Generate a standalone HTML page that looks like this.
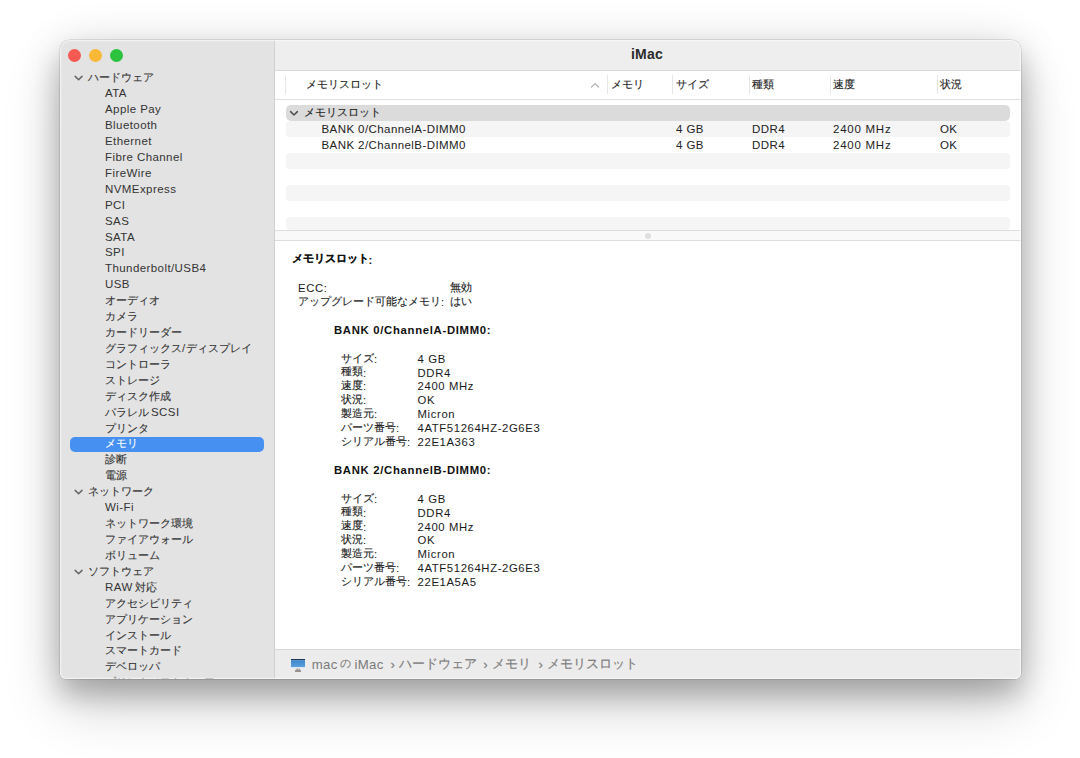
<!DOCTYPE html>
<html lang="ja">
<head>
<meta charset="utf-8">
<style>
*{margin:0;padding:0;box-sizing:border-box}
html,body{width:1080px;height:758px;background:#fff;overflow:hidden;font-family:"Liberation Sans",sans-serif;}
.win{position:absolute;left:60px;top:40px;width:961px;height:639px;border-radius:10px 10px 6px 6px;background:#fff;overflow:hidden;
 box-shadow:0 0 0 0.5px rgba(0,0,0,0.2),0 16px 26px rgba(0,0,0,0.19),0 26px 55px rgba(0,0,0,0.2),0 0 45px rgba(0,0,0,0.09);}
.side{position:absolute;left:0;top:0;width:215px;height:639px;background:#e3e3e3;border-right:1px solid #d0d0d0;overflow:hidden}
.t{position:absolute;white-space:nowrap;}
.abs{position:absolute}
.si{color:#333;}
.ht{color:#222;}
.rt{color:#222;}
.dt{color:#1a1a1a;}
.db{color:#111;font-weight:bold}
.ft{color:#7a7a7a;}
.chev{position:absolute}
.rim{position:absolute;left:0;top:0;width:961px;height:639px;border-radius:10px 10px 6px 6px;box-shadow:inset 0 0 0 1px rgba(255,255,255,0.45),inset 0 0 0 2px rgba(255,255,255,0.15);pointer-events:none}
.cj{position:relative;top:-1.2px;-webkit-text-stroke:0.12px currentColor}
.sel{position:absolute;left:10px;width:193.5px;height:15.3px;border-radius:5px;background:#4690f2}
.dot{position:absolute;width:13px;height:13px;border-radius:50%;top:8.8px}
.title{position:absolute;left:215px;top:0;width:746px;height:31px;background:#eeeeee;border-bottom:1px solid #d9d9d9}
.hdr{position:absolute;left:215px;top:31px;width:746px;height:29px;background:#fff;border-bottom:1px solid #e0e0e0}
.main{position:absolute;left:215px;top:60px;width:746px;height:549px;background:#fff}
.foot{position:absolute;left:215px;top:609px;width:746px;height:30px;background:#ececec;border-top:1px solid #d8d8d8}
.vd{position:absolute;top:35px;width:1px;height:19px;background:#e6e6e6}
.grp{position:absolute;width:724px;height:15.5px;border-radius:5px;background:#dbdbdb}
.stripe{position:absolute;width:724px;height:16px;border-radius:4px;background:#f5f5f5}
.split{position:absolute;width:746px;height:11px;background:#f9f9f9;border-top:1px solid #dddddd;border-bottom:1px solid #dddddd}
.sdot{position:absolute;width:6.4px;height:6.4px;border-radius:50%;background:#e0e0e0}
</style>
</head>
<body>
<div class="win">
  <div class="side">
    <div class="dot" style="left:8px;background:#f65a52"></div>
    <div class="dot" style="left:29px;background:#f9b835"></div>
    <div class="dot" style="left:50px;background:#2bc23d"></div>
    <svg class="chev" style="left:14px;top:35.0px" width="10" height="7" viewBox="0 0 10 7"><path d="M1.2 1.4 L4.6 4.8 L8 1.4" fill="none" stroke="#666" stroke-width="1.5" stroke-linecap="round" stroke-linejoin="round"/></svg>
    <div class="t si" style="left:28.00px;top:29.50px;line-height:16px;"><span class="cj" style="font-size:11px">ハードウェア</span></div>
    <div class="t si" style="left:45.00px;top:45.42px;line-height:16px;"><span style="font-size:11.5px;letter-spacing:0.42px;position:relative;top:-1.2px">ATA</span></div>
    <div class="t si" style="left:45.00px;top:61.34px;line-height:16px;"><span style="font-size:11.5px;letter-spacing:0.42px;position:relative;top:-1.2px">Apple Pay</span></div>
    <div class="t si" style="left:45.00px;top:77.26px;line-height:16px;"><span style="font-size:11.5px;letter-spacing:0.42px;position:relative;top:-1.2px">Bluetooth</span></div>
    <div class="t si" style="left:45.00px;top:93.18px;line-height:16px;"><span style="font-size:11.5px;letter-spacing:0.42px;position:relative;top:-1.2px">Ethernet</span></div>
    <div class="t si" style="left:45.00px;top:109.10px;line-height:16px;"><span style="font-size:11.5px;letter-spacing:0.42px;position:relative;top:-1.2px">Fibre Channel</span></div>
    <div class="t si" style="left:45.00px;top:125.02px;line-height:16px;"><span style="font-size:11.5px;letter-spacing:0.42px;position:relative;top:-1.2px">FireWire</span></div>
    <div class="t si" style="left:45.00px;top:140.94px;line-height:16px;"><span style="font-size:11.5px;letter-spacing:0.42px;position:relative;top:-1.2px">NVMExpress</span></div>
    <div class="t si" style="left:45.00px;top:156.86px;line-height:16px;"><span style="font-size:11.5px;letter-spacing:0.42px;position:relative;top:-1.2px">PCI</span></div>
    <div class="t si" style="left:45.00px;top:172.78px;line-height:16px;"><span style="font-size:11.5px;letter-spacing:0.42px;position:relative;top:-1.2px">SAS</span></div>
    <div class="t si" style="left:45.00px;top:188.70px;line-height:16px;"><span style="font-size:11.5px;letter-spacing:0.42px;position:relative;top:-1.2px">SATA</span></div>
    <div class="t si" style="left:45.00px;top:204.62px;line-height:16px;"><span style="font-size:11.5px;letter-spacing:0.42px;position:relative;top:-1.2px">SPI</span></div>
    <div class="t si" style="left:45.00px;top:220.54px;line-height:16px;"><span style="font-size:11.5px;letter-spacing:0.42px;position:relative;top:-1.2px">Thunderbolt/USB4</span></div>
    <div class="t si" style="left:45.00px;top:236.46px;line-height:16px;"><span style="font-size:11.5px;letter-spacing:0.42px;position:relative;top:-1.2px">USB</span></div>
    <div class="t si" style="left:45.00px;top:252.38px;line-height:16px;"><span class="cj" style="font-size:11px">オーディオ</span></div>
    <div class="t si" style="left:45.00px;top:268.30px;line-height:16px;"><span class="cj" style="font-size:11px">カメラ</span></div>
    <div class="t si" style="left:45.00px;top:284.22px;line-height:16px;"><span class="cj" style="font-size:11px">カードリーダー</span></div>
    <div class="t si" style="left:45.00px;top:300.14px;line-height:16px;"><span class="cj" style="font-size:11px">グラフィックス</span><span style="font-size:11.5px;letter-spacing:0.42px;position:relative;top:-1.2px">/</span><span class="cj" style="font-size:11px">ディスプレイ</span></div>
    <div class="t si" style="left:45.00px;top:316.06px;line-height:16px;"><span class="cj" style="font-size:11px">コントローラ</span></div>
    <div class="t si" style="left:45.00px;top:331.98px;line-height:16px;"><span class="cj" style="font-size:11px">ストレージ</span></div>
    <div class="t si" style="left:45.00px;top:347.90px;line-height:16px;"><span class="cj" style="font-size:11px">ディスク作成</span></div>
    <div class="t si" style="left:45.00px;top:363.82px;line-height:16px;"><span class="cj" style="font-size:11px">パラレル</span><span style="font-size:11.5px;letter-spacing:0.42px;position:relative;top:-1.2px"><span style="margin-left:2px"></span>SCSI</span></div>
    <div class="t si" style="left:45.00px;top:379.74px;line-height:16px;"><span class="cj" style="font-size:11px">プリンタ</span></div>
    <div class="sel" style="top:397.16px"></div>
    <div class="t si" style="left:45.00px;top:395.66px;line-height:16px;color:#fff"><span class="cj" style="font-size:11px">メモリ</span></div>
    <div class="t si" style="left:45.00px;top:411.58px;line-height:16px;"><span class="cj" style="font-size:11px">診断</span></div>
    <div class="t si" style="left:45.00px;top:427.50px;line-height:16px;"><span class="cj" style="font-size:11px">電源</span></div>
    <svg class="chev" style="left:14px;top:448.92px" width="10" height="7" viewBox="0 0 10 7"><path d="M1.2 1.4 L4.6 4.8 L8 1.4" fill="none" stroke="#666" stroke-width="1.5" stroke-linecap="round" stroke-linejoin="round"/></svg>
    <div class="t si" style="left:28.00px;top:443.42px;line-height:16px;"><span class="cj" style="font-size:11px">ネットワーク</span></div>
    <div class="t si" style="left:45.00px;top:459.34px;line-height:16px;"><span style="font-size:11.5px;letter-spacing:0.42px;position:relative;top:-1.2px">Wi-Fi</span></div>
    <div class="t si" style="left:45.00px;top:475.26px;line-height:16px;"><span class="cj" style="font-size:11px">ネットワーク環境</span></div>
    <div class="t si" style="left:45.00px;top:491.18px;line-height:16px;"><span class="cj" style="font-size:11px">ファイアウォール</span></div>
    <div class="t si" style="left:45.00px;top:507.10px;line-height:16px;"><span class="cj" style="font-size:11px">ボリューム</span></div>
    <svg class="chev" style="left:14px;top:528.52px" width="10" height="7" viewBox="0 0 10 7"><path d="M1.2 1.4 L4.6 4.8 L8 1.4" fill="none" stroke="#666" stroke-width="1.5" stroke-linecap="round" stroke-linejoin="round"/></svg>
    <div class="t si" style="left:28.00px;top:523.02px;line-height:16px;"><span class="cj" style="font-size:11px">ソフトウェア</span></div>
    <div class="t si" style="left:45.00px;top:538.94px;line-height:16px;"><span style="font-size:11.5px;letter-spacing:0.42px;position:relative;top:-1.2px">RAW<span style="margin-left:2.5px"></span></span><span class="cj" style="font-size:11px">対応</span></div>
    <div class="t si" style="left:45.00px;top:554.86px;line-height:16px;"><span class="cj" style="font-size:11px">アクセシビリティ</span></div>
    <div class="t si" style="left:45.00px;top:570.78px;line-height:16px;"><span class="cj" style="font-size:11px">アプリケーション</span></div>
    <div class="t si" style="left:45.00px;top:586.70px;line-height:16px;"><span class="cj" style="font-size:11px">インストール</span></div>
    <div class="t si" style="left:45.00px;top:602.62px;line-height:16px;"><span class="cj" style="font-size:11px">スマートカード</span></div>
    <div class="t si" style="left:45.00px;top:618.54px;line-height:16px;"><span class="cj" style="font-size:11px">デベロッパ</span></div>
    <div class="t si" style="left:45.00px;top:634.46px;line-height:16px;"><span class="cj" style="font-size:11px">プリンタソフトウェア</span></div>
  </div>
  <div class="title"><div class="t" style="left:356px;top:6px;font-size:14px;line-height:16px;font-weight:bold;color:#2b2b2b;letter-spacing:0.2px">iMac</div></div>
  <div class="hdr"></div>
  <div class="main"></div>
  <div class="foot"></div>
  <div class="t ht" style="left:245.50px;top:36.00px;line-height:16px;"><span class="cj" style="font-size:11px">メモリスロット</span></div>
  <svg class="abs" style="left:530px;top:42px" width="10" height="6" viewBox="0 0 10 6"><path d="M1.5 5 L5 1.5 L8.5 5" fill="none" stroke="#b5b5b5" stroke-width="1.2" stroke-linecap="round"/></svg>
  <div class="vd" style="left:225px"></div>
  <div class="vd" style="left:547px"></div>
  <div class="vd" style="left:612px"></div>
  <div class="vd" style="left:689px"></div>
  <div class="vd" style="left:770px"></div>
  <div class="vd" style="left:877px"></div>
  <div class="t ht" style="left:550.50px;top:36.00px;line-height:16px;"><span class="cj" style="font-size:11px">メモリ</span></div>
  <div class="t ht" style="left:616.00px;top:36.00px;line-height:16px;"><span class="cj" style="font-size:11px">サイズ</span></div>
  <div class="t ht" style="left:692.00px;top:36.00px;line-height:16px;"><span class="cj" style="font-size:11px">種類</span></div>
  <div class="t ht" style="left:773.00px;top:36.00px;line-height:16px;"><span class="cj" style="font-size:11px">速度</span></div>
  <div class="t ht" style="left:880.00px;top:36.00px;line-height:16px;"><span class="cj" style="font-size:11px">状況</span></div>
  <div class="grp" style="left:226px;top:65px"></div>
  <svg class="abs" style="left:229px;top:70px" width="10" height="7" viewBox="0 0 10 7"><path d="M1.6 1.6 L5 5 L8.4 1.6" fill="none" stroke="#505050" stroke-width="1.5" stroke-linecap="round" stroke-linejoin="round"/></svg>
  <div class="t rt" style="left:244.00px;top:64.00px;line-height:16px;"><span class="cj" style="font-size:11px">メモリスロット</span></div>
  <div class="stripe" style="left:226px;top:81px;height:16px"></div>
  <div class="stripe" style="left:226px;top:113px;height:16px"></div>
  <div class="stripe" style="left:226px;top:145px;height:16px"></div>
  <div class="stripe" style="left:226px;top:177px;height:13px"></div>
  <div class="t rt" style="left:261.50px;top:80.00px;line-height:16px;"><span style="font-size:11.5px;letter-spacing:0.42px">BANK 0/ChannelA-DIMM0</span></div>
  <div class="t rt" style="left:616.00px;top:80.00px;line-height:16px;"><span style="font-size:11.5px;letter-spacing:0.42px">4 GB</span></div>
  <div class="t rt" style="left:692.00px;top:80.00px;line-height:16px;"><span style="font-size:11.5px;letter-spacing:0.42px">DDR4</span></div>
  <div class="t rt" style="left:773.00px;top:80.00px;line-height:16px;"><span style="font-size:11.5px;letter-spacing:0.75px">2400 MHz</span></div>
  <div class="t rt" style="left:880.00px;top:80.00px;line-height:16px;"><span style="font-size:11.5px;letter-spacing:0.42px">OK</span></div>
  <div class="t rt" style="left:261.50px;top:96.00px;line-height:16px;"><span style="font-size:11.5px;letter-spacing:0.42px">BANK 2/ChannelB-DIMM0</span></div>
  <div class="t rt" style="left:616.00px;top:96.00px;line-height:16px;"><span style="font-size:11.5px;letter-spacing:0.42px">4 GB</span></div>
  <div class="t rt" style="left:692.00px;top:96.00px;line-height:16px;"><span style="font-size:11.5px;letter-spacing:0.42px">DDR4</span></div>
  <div class="t rt" style="left:773.00px;top:96.00px;line-height:16px;"><span style="font-size:11.5px;letter-spacing:0.75px">2400 MHz</span></div>
  <div class="t rt" style="left:880.00px;top:96.00px;line-height:16px;"><span style="font-size:11.5px;letter-spacing:0.42px">OK</span></div>
  <div class="split" style="left:215px;top:190px"></div>
  <div class="sdot" style="left:584.8px;top:192.6px"></div>
  <div class="t db" style="left:231.50px;top:211.50px;line-height:14px;"><span class="cj" style="font-size:10.5px">メモリスロット</span><span style="font-size:11.3px;letter-spacing:0.7px">:</span></div>
  <div class="t dt" style="left:238.00px;top:240.00px;line-height:14px;"><span style="font-size:11.3px;letter-spacing:0.62px">ECC:</span></div>
  <div class="t dt" style="left:390.00px;top:240.00px;line-height:14px;"><span class="cj" style="font-size:10.5px">無効</span></div>
  <div class="t dt" style="left:238.00px;top:253.70px;line-height:14px;"><span class="cj" style="font-size:10.5px">アップグレード可能なメモリ</span><span style="font-size:11.3px;letter-spacing:0.62px">:</span></div>
  <div class="t dt" style="left:390.00px;top:253.70px;line-height:14px;"><span class="cj" style="font-size:10.5px">はい</span></div>
  <div class="t db" style="left:274.00px;top:282.20px;line-height:14px;"><span style="font-size:11.3px;letter-spacing:0.7px">BANK 0/ChannelA-DIMM0:</span></div>
  <div class="t dt" style="left:281.00px;top:310.70px;line-height:14px;"><span class="cj" style="font-size:10.5px">サイズ</span><span style="font-size:11.3px;letter-spacing:0.62px">:</span></div>
  <div class="t dt" style="left:357.60px;top:310.70px;line-height:14px;"><span style="font-size:11.3px;letter-spacing:0.62px">4 GB</span></div>
  <div class="t dt" style="left:281.00px;top:324.55px;line-height:14px;"><span class="cj" style="font-size:10.5px">種類</span><span style="font-size:11.3px;letter-spacing:0.62px">:</span></div>
  <div class="t dt" style="left:357.60px;top:324.55px;line-height:14px;"><span style="font-size:11.3px;letter-spacing:0.62px">DDR4</span></div>
  <div class="t dt" style="left:281.00px;top:338.40px;line-height:14px;"><span class="cj" style="font-size:10.5px">速度</span><span style="font-size:11.3px;letter-spacing:0.62px">:</span></div>
  <div class="t dt" style="left:357.60px;top:338.40px;line-height:14px;"><span style="font-size:11.3px;letter-spacing:0.62px">2400 MHz</span></div>
  <div class="t dt" style="left:281.00px;top:352.25px;line-height:14px;"><span class="cj" style="font-size:10.5px">状況</span><span style="font-size:11.3px;letter-spacing:0.62px">:</span></div>
  <div class="t dt" style="left:357.60px;top:352.25px;line-height:14px;"><span style="font-size:11.3px;letter-spacing:0.62px">OK</span></div>
  <div class="t dt" style="left:281.00px;top:366.10px;line-height:14px;"><span class="cj" style="font-size:10.5px">製造元</span><span style="font-size:11.3px;letter-spacing:0.62px">:</span></div>
  <div class="t dt" style="left:357.60px;top:366.10px;line-height:14px;"><span style="font-size:11.3px;letter-spacing:0.62px">Micron</span></div>
  <div class="t dt" style="left:281.00px;top:379.95px;line-height:14px;"><span class="cj" style="font-size:10.5px">パーツ番号</span><span style="font-size:11.3px;letter-spacing:0.62px">:</span></div>
  <div class="t dt" style="left:357.60px;top:379.95px;line-height:14px;"><span style="font-size:11.3px;letter-spacing:0.62px">4ATF51264HZ-2G6E3</span></div>
  <div class="t dt" style="left:281.00px;top:393.80px;line-height:14px;"><span class="cj" style="font-size:10.5px">シリアル番号</span><span style="font-size:11.3px;letter-spacing:0.62px">:</span></div>
  <div class="t dt" style="left:357.60px;top:393.80px;line-height:14px;"><span style="font-size:11.3px;letter-spacing:0.62px">22E1A363</span></div>
  <div class="t db" style="left:274.00px;top:422.30px;line-height:14px;"><span style="font-size:11.3px;letter-spacing:0.7px">BANK 2/ChannelB-DIMM0:</span></div>
  <div class="t dt" style="left:281.00px;top:450.80px;line-height:14px;"><span class="cj" style="font-size:10.5px">サイズ</span><span style="font-size:11.3px;letter-spacing:0.62px">:</span></div>
  <div class="t dt" style="left:357.60px;top:450.80px;line-height:14px;"><span style="font-size:11.3px;letter-spacing:0.62px">4 GB</span></div>
  <div class="t dt" style="left:281.00px;top:464.65px;line-height:14px;"><span class="cj" style="font-size:10.5px">種類</span><span style="font-size:11.3px;letter-spacing:0.62px">:</span></div>
  <div class="t dt" style="left:357.60px;top:464.65px;line-height:14px;"><span style="font-size:11.3px;letter-spacing:0.62px">DDR4</span></div>
  <div class="t dt" style="left:281.00px;top:478.50px;line-height:14px;"><span class="cj" style="font-size:10.5px">速度</span><span style="font-size:11.3px;letter-spacing:0.62px">:</span></div>
  <div class="t dt" style="left:357.60px;top:478.50px;line-height:14px;"><span style="font-size:11.3px;letter-spacing:0.62px">2400 MHz</span></div>
  <div class="t dt" style="left:281.00px;top:492.35px;line-height:14px;"><span class="cj" style="font-size:10.5px">状況</span><span style="font-size:11.3px;letter-spacing:0.62px">:</span></div>
  <div class="t dt" style="left:357.60px;top:492.35px;line-height:14px;"><span style="font-size:11.3px;letter-spacing:0.62px">OK</span></div>
  <div class="t dt" style="left:281.00px;top:506.20px;line-height:14px;"><span class="cj" style="font-size:10.5px">製造元</span><span style="font-size:11.3px;letter-spacing:0.62px">:</span></div>
  <div class="t dt" style="left:357.60px;top:506.20px;line-height:14px;"><span style="font-size:11.3px;letter-spacing:0.62px">Micron</span></div>
  <div class="t dt" style="left:281.00px;top:520.05px;line-height:14px;"><span class="cj" style="font-size:10.5px">パーツ番号</span><span style="font-size:11.3px;letter-spacing:0.62px">:</span></div>
  <div class="t dt" style="left:357.60px;top:520.05px;line-height:14px;"><span style="font-size:11.3px;letter-spacing:0.62px">4ATF51264HZ-2G6E3</span></div>
  <div class="t dt" style="left:281.00px;top:533.90px;line-height:14px;"><span class="cj" style="font-size:10.5px">シリアル番号</span><span style="font-size:11.3px;letter-spacing:0.62px">:</span></div>
  <div class="t dt" style="left:357.60px;top:533.90px;line-height:14px;"><span style="font-size:11.3px;letter-spacing:0.62px">22E1A5A5</span></div>
  <svg class="abs" style="left:231px;top:618px" width="15" height="14" viewBox="0 0 15 14">
<defs><linearGradient id="scr" x1="0" y1="0" x2="0" y2="1"><stop offset="0" stop-color="#3f86cc"/><stop offset="1" stop-color="#5aa0de"/></linearGradient></defs>
<rect x="0" y="1" width="14" height="1.2" fill="#1d3556"/><rect x="0" y="2.2" width="14" height="6.8" fill="url(#scr)"/>
<rect x="0" y="9" width="14" height="1.6" fill="#dfe9f3"/><path d="M5.2 10.6 L8.8 10.6 L9.6 13 L4.4 13 Z" fill="#b9b1a8"/><rect x="4" y="12.6" width="6" height="1" fill="#5f5954"/></svg>
  <div class="t ft" style="left:251.70px;top:616.20px;line-height:16px;"><span style="font-size:13.2px;letter-spacing:0.35px">mac</span></div>
  <div class="t ft" style="left:294.40px;top:616.20px;line-height:16px;"><span style="font-size:13.2px;letter-spacing:0.35px">iMac</span></div>
  <div class="t ft" style="left:330.50px;top:616.20px;line-height:16px;font-size:11px;margin-top:2px"><span class="cj" style="font-size:13.4px">›</span></div>
  <div class="t ft" style="left:338.50px;top:616.20px;line-height:16px;"><span class="cj" style="font-size:13.4px">ハードウェア</span></div>
  <div class="t ft" style="left:423.30px;top:616.20px;line-height:16px;font-size:11px;margin-top:2px"><span class="cj" style="font-size:13.4px">›</span></div>
  <div class="t ft" style="left:431.50px;top:616.20px;line-height:16px;"><span class="cj" style="font-size:13.4px">メモリ</span></div>
  <div class="t ft" style="left:478.50px;top:616.20px;line-height:16px;font-size:11px;margin-top:2px"><span class="cj" style="font-size:13.4px">›</span></div>
  <div class="t ft" style="left:486.50px;top:616.20px;line-height:16px;"><span class="cj" style="font-size:13.4px">メモリスロット</span></div>
  <div class="t ft" style="left:280.30px;top:615.20px;line-height:16px;"><span class="cj" style="font-size:11.2px">の</span></div>
  <div class="rim"></div>
</div>
</body>
</html>
